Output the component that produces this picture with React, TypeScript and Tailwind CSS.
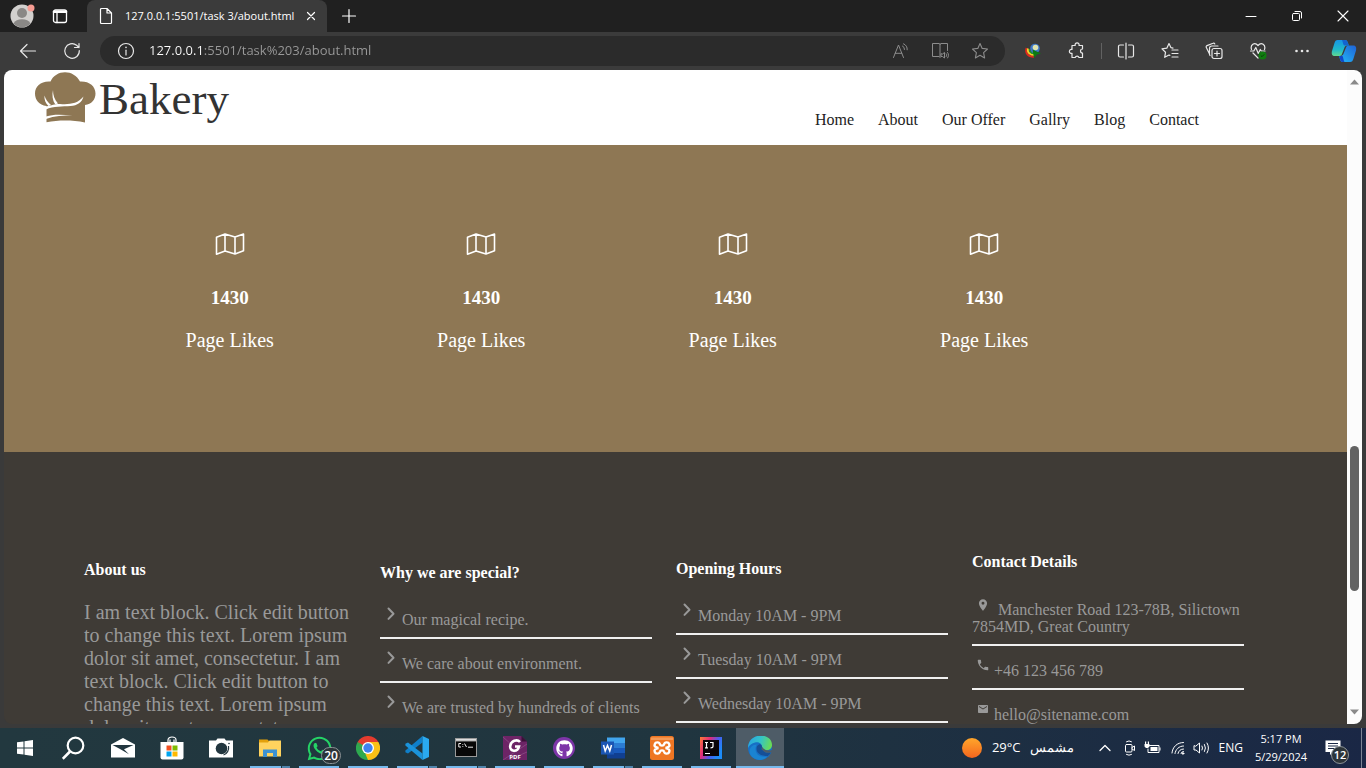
import React, { useState } from "react";
import type { ReactNode } from "react";
import { FaGithub, FaWhatsapp } from "react-icons/fa";
import { MdEmail, MdLocalPhone, MdLocationOn } from "react-icons/md";

const stroke = {
  fill: "none",
  stroke: "currentColor",
  strokeLinecap: "round" as const,
  strokeLinejoin: "round" as const,
};

function ToolButton({ label, children, className = "" }: { label: string; children: ReactNode; className?: string }) {
  return (
    <button type="button" aria-label={label} className={`flex h-8 shrink-0 items-center justify-center ${className}`}>
      {children}
    </button>
  );
}

function TitleBar() {
  return (
    <div className="flex h-8 shrink-0 items-stretch bg-[#202020] text-white">
      <ToolButton label="Profile" className="w-11">
        <svg width="26" height="26" viewBox="0 0 26 26">
          <circle cx="13" cy="13" r="11.5" fill="#d2d0ce" />
          <circle cx="13" cy="10" r="5" fill="#8a8886" />
          <path d="M4.500 20.500a11.500 11.500 0 0 0 17 0c-1.500-3-4.500-4.300-8.500-4.300s-7 1.300-8.500 4.300Z" fill="#8a8886" />
          <circle cx="22" cy="5" r="3.500" fill="#f79c93" />
        </svg>
      </ToolButton>
      <ToolButton label="Tab actions" className="w-8">
        <svg width="16" height="16" viewBox="0 0 16 16" {...stroke} strokeWidth="1.300">
          <rect x="1.500" y="2" width="13" height="12.500" rx="2" />
          <path d="M5 5v9.500" />
          <path d="M2 3.800h12" strokeWidth="2.600" />
        </svg>
      </ToolButton>
      <div className="ml-[11px] flex w-60 items-center rounded-t-lg bg-[#3b3b3b] pl-3 pr-2">
        <svg width="14" height="18" viewBox="0 0 14 18" {...stroke} strokeWidth="1.200" className="shrink-0">
          <path d="M1.500 2.500a1 1 0 0 1 1-1H8l4.500 4.500v9.500a1 1 0 0 1-1 1h-9a1 1 0 0 1-1-1ZM8 1.500V6h4.500" />
        </svg>
        <span className="ml-3 flex-1 whitespace-nowrap text-[11px]">127.0.0.1:5501/task 3/about.html</span>
        <button type="button" aria-label="Close tab" className="flex w-4 shrink-0 items-center justify-center">
          <svg width="10" height="10" viewBox="0 0 10 10" {...stroke} strokeWidth="1.200">
            <path d="m1.500 1.500 7 7m0-7-7 7" />
          </svg>
        </button>
      </div>
      <ToolButton label="New tab" className="w-11">
        <svg width="16" height="16" viewBox="0 0 16 16" {...stroke} strokeWidth="1.200">
          <path d="M8 1.500v13M1.500 8h13" />
        </svg>
      </ToolButton>
      <div className="ml-auto flex">
        <ToolButton label="Minimize" className="w-[46px]">
          <svg width="12" height="12" viewBox="0 0 12 12" {...stroke}>
            <path d="M1 6.500h10" />
          </svg>
        </ToolButton>
        <ToolButton label="Restore" className="w-[46px]">
          <svg width="12" height="12" viewBox="0 0 12 12" {...stroke}>
            <rect x="1.500" y="3.500" width="7" height="7" rx="1" />
            <path d="M4 1.500h5a1.500 1.500 0 0 1 1.500 1.500v5" />
          </svg>
        </ToolButton>
        <ToolButton label="Close" className="w-[46px]">
          <svg width="12" height="12" viewBox="0 0 12 12" {...stroke} strokeWidth="1.100">
            <path d="m1 1 10 10m0-10L1 11" />
          </svg>
        </ToolButton>
      </div>
    </div>
  );
}

function AddressBar() {
  const [url, setUrl] = useState("127.0.0.1:5501/task%203/about.html");
  return (
    <div className="flex h-[38px] shrink-0 items-center bg-[#3b3b3b] pl-1.5 pr-0.5 text-[#e8e8e8]">
      <ToolButton label="Back" className="w-11">
        <svg width="18" height="16" viewBox="0 0 18 16" {...stroke} strokeWidth="1.200">
          <path d="M16.500 8h-15M8 1.500 1.500 8 8 14.500" />
        </svg>
      </ToolButton>
      <ToolButton label="Reload" className="w-11">
        <svg width="18" height="18" viewBox="0 0 18 18" {...stroke} strokeWidth="1.200">
          <path d="M16.300 8.500a7.300 7.300 0 1 1-2.700-5.200L16 5.500M16 1.500v4h-4.500" />
        </svg>
      </ToolButton>
      <div className="ml-1.5 flex h-[30px] flex-1 items-center rounded-full bg-[#2b2b2b] pl-[17px] pr-[5px]">
        <button type="button" aria-label="Site information" className="shrink-0">
          <svg width="18" height="18" viewBox="0 0 18 18" {...stroke} strokeWidth="1.200">
            <circle cx="9" cy="9" r="7.500" />
            <path d="M9 8.200V13" />
            <path d="M9 5.400v.1" strokeWidth="1.600" />
          </svg>
        </button>
        <input
          aria-label="Address"
          value={url}
          onChange={(e) => setUrl(e.target.value)}
          className="ml-[14px] min-w-0 flex-1 bg-[linear-gradient(90deg,#ffffff_55px,#9a9a9a_55px)] bg-clip-text text-[13px] text-transparent outline-none"
        />
        <div className="flex text-[#8c8c8c]">
          <ToolButton label="Read aloud" className="w-10">
            <svg width="17" height="16" viewBox="0 0 17 16" {...stroke}>
              <path d="m1.500 14.500 5-12.500 5 12.500M3.200 10.300h6.600M10.500 3a3.500 3.500 0 0 1 2 3.500M11.500.8a6 6 0 0 1 3.700 6" />
            </svg>
          </ToolButton>
          <ToolButton label="Immersive reader" className="w-10">
            <svg width="18" height="18" viewBox="0 0 18 18" {...stroke}>
              <path d="M8 14.500H1.500v-13H8a1 1 0 0 1 1 1v13M9 2.500a1 1 0 0 1 1-1h6.500v7" />
              <path d="M10 12v2.500h1.500l2 1.500v-5.500l-2 1.500ZM15.200 11.800c.6.800.6 2 0 2.800M16.600 10.500c1.200 1.500 1.200 4 0 5.500" />
            </svg>
          </ToolButton>
          <ToolButton label="Add to favorites" className="w-10">
            <Star />
          </ToolButton>
        </div>
      </div>
      <div className="flex items-center">
        <ToolButton label="Download manager" className="ml-2 w-10">
          <svg width="18" height="16" viewBox="0 0 18 16">
            <path d="M2.500 5C1 10 4 14 10 13.800" fill="none" stroke="#e02a1c" strokeWidth="1.800" />
            <path d="M4 5.500C3 9.500 6 12 11 12" fill="none" stroke="#f6d12c" strokeWidth="1.800" />
            <path d="M5.500 6c0 3 2 4.500 5 4.500" fill="none" stroke="#1d9a2c" strokeWidth="1.500" />
            <circle cx="11" cy="5.500" r="4.800" fill="#3f78c8" />
            <circle cx="11.500" cy="4.500" r="2.800" fill="#dfe4b0" />
            <path d="M8.500 6.500 17 10.500l-4 1-3 3.500Z" fill="#0c7a13" />
          </svg>
        </ToolButton>
        <ToolButton label="Extensions" className="w-12">
          <svg width="18" height="18" viewBox="0 0 18 18" {...stroke} strokeWidth="1.200">
            <path d="M4 3.500h3.200a2 2 0 1 1 3.800 0h3.500V7a2 2 0 0 0 0 4v4.500H11a2 2 0 0 0-3.800 0H4v-4.200a2 2 0 1 1 0-3.800Z" />
          </svg>
        </ToolButton>
        <span className="h-4 w-px bg-[#626262]" />
        <ToolButton label="Split screen" className="ml-0.5 w-11">
          <svg width="18" height="18" viewBox="0 0 18 18" {...stroke} strokeWidth="1.200">
            <path d="M6.500 3H3a1.500 1.500 0 0 0-1.500 1.500v9A1.500 1.500 0 0 0 3 15h3.500M11.500 3H15a1.500 1.500 0 0 1 1.500 1.500v9A1.500 1.500 0 0 1 15 15h-3.500M9 1v16" />
          </svg>
        </ToolButton>
        <ToolButton label="Favorites" className="w-11">
          <svg width="18" height="18" viewBox="0 0 18 18" {...stroke} strokeWidth="1.200">
            <path d="m12 6-2-.3-2-4.200-2.200 4.700-4.800.7 3.500 3.400-.8 5 4.300-2.300.8.400M11 8h6M11 11.500h6M11 15h6M10 5.700l2 .5" />
          </svg>
        </ToolButton>
        <ToolButton label="Collections" className="w-11">
          <svg width="18" height="18" viewBox="0 0 18 18" {...stroke} strokeWidth="1.200">
            <rect x="7" y="6.500" width="10" height="10" rx="2" />
            <path d="M12 9v5M9.500 11.500h5M4.500 12 1.300 5.500A1.400 1.400 0 0 1 2 3.600L8 1.300a1.400 1.400 0 0 1 1.800.7M5 13.500A2.500 2.500 0 0 1 4.500 12V6.300A2.300 2.300 0 0 1 6.800 4H13" />
          </svg>
        </ToolButton>
        <ToolButton label="Browser essentials" className="w-11">
          <svg width="19" height="18" viewBox="0 0 19 18">
            <path
              {...stroke}
              strokeWidth="1.200"
              d="M2.500 7.500C1 3 5.500-.5 9 3.500c3.500-4 8-.5 6.500 4M1.500 9h3.300l2-3.500 2.500 6 2-4 1 1.500H16M4 11l5 5"
            />
            <circle cx="13.500" cy="13.500" r="4" fill="#107c10" />
            <path d="m11.800 13.500 1.200 1.200 2.200-2.300" fill="none" stroke="#0a3d0a" />
          </svg>
        </ToolButton>
        <ToolButton label="Settings and more" className="w-11">
          <svg width="16" height="4" viewBox="0 0 16 4" fill="currentColor">
            <circle cx="2.500" cy="2" r="1.300" />
            <circle cx="8" cy="2" r="1.300" />
            <circle cx="13.500" cy="2" r="1.300" />
          </svg>
        </ToolButton>
        <ToolButton label="Copilot" className="w-10">
          <svg width="26" height="24" viewBox="0 0 26 24">
            <defs>
              <linearGradient id="copilotA" x1="0" y1="0" x2="0" y2="1">
                <stop offset="0" stopColor="#1795e6" />
                <stop offset=".6" stopColor="#20b9c9" />
                <stop offset="1" stopColor="#61d890" />
              </linearGradient>
              <linearGradient id="copilotB" x1="1" y1="0" x2="0" y2="1">
                <stop offset="0" stopColor="#1f62d6" />
                <stop offset="1" stopColor="#22baf8" />
              </linearGradient>
            </defs>
            <path d="M6.500 1H14c2 0 2.500 1.500 3 3l.8 2.500H16c-1.500 0-2.200 1-2.700 2.500L11 15c-.5 1.500-1.500 2-3 2H4c-3 0-3.700-2-3-5L3.500 4C4 2 5 1 6.500 1Z" fill="url(#copilotA)" />
            <path d="M11 1h3c2 0 2.500 1.500 3 3l.8 2.500h-4C12 6.500 12 3 11 1Z" fill="#1463cf" />
            <path d="M18 6.500h4c3 0 3.600 2 3 5L22.500 19.500c-.7 2.500-1.500 3.500-3.500 3.500h-7c-2 0-2.500-1-3-3L8 17c2.500 0 4-.5 4.700-2.800L15 8.500c.5-1.500 1.500-2 3-2Z" fill="url(#copilotB)" />
            <path d="M8 17h3.500c1 2 1 4.500 2 6H12c-2 0-2.500-1-3-3Z" fill="#1148c8" />
          </svg>
        </ToolButton>
      </div>
    </div>
  );
}

function Star() {
  return (
    <svg width="18" height="18" viewBox="0 0 18 18" {...stroke} strokeWidth="1.100">
      <path d="m9 1.500 2.200 4.900 5.300.6-3.900 3.600 1 5.300L9 13.300l-4.600 2.600 1-5.300L1.500 7l5.300-.6Z" />
    </svg>
  );
}

const navItems = ["Home", "About", "Our Offer", "Gallry", "Blog", "Contact"];

function SiteHeader() {
  return (
    <header className="flex h-[75px] shrink-0 items-start bg-white pl-[30px] pr-[148px]">
      <a href="#home" className="flex items-start text-[#333]">
        <svg width="64" height="56" viewBox="0 0 64 56" className="shrink-0">
          <path
            fill="#8e7754"
            d="M12.500 36C5 35 1 30 1 23.500 1 16 7 10.800 16.500 11.500 19 5.500 25 2.200 31 2.200S43 5.500 46 11.500C55 11 61.500 16 61.500 23.500c0 6-4 11-10.500 11.500V52.500c-13-2.500-26-2.500-38.500-.2Z"
          />
          <g fill="#fff">
            <path d="M10.500 25.500c1 4 3.500 7 6.500 9.500l-2.500 1C11.500 33.500 10 29 10.500 25.500ZM19 20c0 5 1.500 9.500 5 13.500l-2.800.8C18.500 30.500 17.800 25 19 20Z" />
            <path d="M12 36.500c7-1.500 9-2.800 14-2.500 9 .6 17.500 0 23.500-7.500-1.500 6-6 9-13 9.500-8 .5-17 0-24.500 3.500Z" />
            <path d="M12 46.500c8-3 17-1.500 26.500-1.500-9 .5-18 .8-26.500 4Z" />
          </g>
        </svg>
        <span className="ml-px mt-[3px] font-['Liberation_Serif',serif] text-[45px] leading-[52px]">Bakery</span>
      </a>
      <nav className="ml-auto mt-10 flex gap-6 text-base leading-5 text-[#222]">
        {navItems.map((item) => (
          <a key={item} href={`#${item.toLowerCase().replace(" ", "-")}`}>
            {item}
          </a>
        ))}
      </nav>
    </header>
  );
}

function MapIcon() {
  return (
    <svg width="30" height="24" viewBox="0 0 30 24" {...stroke} strokeWidth="1.600">
      <path d="M1.500 5.200v17L10 19l10 3 8.500-3.200V2L20 5 10 2 1.500 5.200ZM10 2v17M20 5v17" />
    </svg>
  );
}

function Stats() {
  return (
    <section className="h-[307px] shrink-0 bg-[#8e7754] pl-[100px] pr-[237px] pt-[87px] text-white">
      <ul className="grid grid-cols-4">
        {[0, 1, 2, 3].map((n) => (
          <li key={n} className="flex flex-col items-center">
            <MapIcon />
            <h3 className="mt-8 text-[19px] font-bold leading-5">1430</h3>
            <p className="mt-5 text-xl leading-6">Page Likes</p>
          </li>
        ))}
      </ul>
    </section>
  );
}

function Heading({ children }: { children: ReactNode }) {
  return <h4 className="text-base font-bold leading-[18px] text-white">{children}</h4>;
}

function ArrowList({ items }: { items: string[] }) {
  return (
    <ul className="mt-5">
      {items.map((item) => (
        <li key={item} className="mb-[7px] flex h-[37px] items-start border-b-2 border-[#f0f0f0] pt-[5px]">
          <svg width="22" height="14" viewBox="0 0 22 14" {...stroke} strokeWidth="2" className="shrink-0">
            <path d="m8.500 1.500 5 5.200-5 5.200" />
          </svg>
          <span className="mt-1 whitespace-nowrap leading-[18px]">{item}</span>
        </li>
      ))}
    </ul>
  );
}

function SiteFooter() {
  return (
    <footer className="grid flex-1 grid-cols-4 items-start gap-6 bg-[#3f3b36] pl-20 pr-[103px] pt-[100px] text-base text-[#999]">
      <section className="pt-[9px]">
        <Heading>About us</Heading>
        <p className="mt-[22px] text-xl leading-[23px]">
          I am text block. Click edit button to change this text. Lorem ipsum dolor sit amet, consectetur. I am text
          block. Click edit button to change this text. Lorem ipsum dolor sit amet, consectetur.
        </p>
      </section>
      <section className="pt-3">
        <Heading>Why we are special?</Heading>
        <ArrowList items={["Our magical recipe.", "We care about environment.", "We are trusted by hundreds of clients"]} />
      </section>
      <section className="pt-2">
        <Heading>Opening Hours</Heading>
        <ArrowList items={["Monday 10AM - 9PM", "Tuesday 10AM - 9PM", "Wednesday 10AM - 9PM"]} />
      </section>
      <section className="pt-px">
        <Heading>Contact Details</Heading>
        <ul className="mt-[27px] leading-[17px]">
          <li className="h-12 border-b-2 border-[#f0f0f0]">
            <MdLocationOn size={14} className="ml-1 mr-2 inline align-[3px]" />
            Manchester Road 123-78B, Silictown 7854MD, Great Country
          </li>
          <li className="flex h-11 items-start border-b-2 border-[#f0f0f0] pt-3">
            <MdLocalPhone size={14} className="mx-1 shrink-0" />
            <span className="mt-1">+46 123 456 789</span>
          </li>
          <li className="flex h-11 items-start pt-3">
            <MdEmail size={14} className="mx-1 shrink-0 p-px" />
            <span className="mt-1">hello@sitename.com</span>
          </li>
        </ul>
      </section>
    </footer>
  );
}

function ScrollBar() {
  return (
    <div className="flex w-[15px] shrink-0 flex-col items-center bg-[#fcfcfc] text-[#8a8a8a]">
      <button type="button" aria-label="Scroll up" className="flex h-6 w-full items-center justify-center">
        <svg width="9" height="6" viewBox="0 0 9 6" fill="currentColor">
          <path d="M4.500.5 9 5.500H0Z" />
        </svg>
      </button>
      <div className="flex w-full flex-1 flex-col items-center">
        <div className="flex-[352]" />
        <div className="w-[9px] flex-[145] rounded-full bg-[#636363]" />
        <div className="flex-[109]" />
      </div>
      <button type="button" aria-label="Scroll down" className="flex h-6 w-full items-center justify-center">
        <svg width="9" height="6" viewBox="0 0 9 6" fill="currentColor">
          <path d="M0 .5h9L4.500 5.500Z" />
        </svg>
      </button>
    </div>
  );
}

type App = { name: string; icon: ReactNode; state?: "open" | "stacked" | "active"; badge?: string };

const apps: App[] = [
  {
    name: "Start",
    icon: (
      <svg width="16" height="16" viewBox="0 0 16 16" fill="#fff">
        <path d="m0 2.300 6.500-.9v6.100H0ZM7.500 1.200 16 0v7.500H7.500ZM0 8.500h6.500v6.100L0 13.700ZM7.500 8.500H16V16l-8.500-1.200Z" />
      </svg>
    ),
  },
  {
    name: "Search",
    icon: (
      <svg width="24" height="24" viewBox="0 0 24 24" fill="none" stroke="#fff" strokeWidth="2.200">
        <circle cx="13.500" cy="9.500" r="7.800" />
        <path d="M8 15.500.8 22.800" strokeWidth="2.600" />
      </svg>
    ),
  },
  {
    name: "Mail",
    icon: (
      <svg width="24" height="20" viewBox="0 0 24 20">
        <path d="M0 6.500 12 0l12 6.500V19.500H0Z" fill="#fff" />
        <path d="M1.500 7h21L13 11.200l5 5L9 11Z" fill="#22363f" />
      </svg>
    ),
  },
  {
    name: "Store",
    icon: (
      <svg width="24" height="24" viewBox="0 0 24 24">
        <path d="M8 7V4c0-4 8-4 8 0v3M10 7V3.500M14 7V3.500" fill="none" stroke="#fff" strokeWidth="1.200" />
        <path d="M.5 6h23v15.500a2 2 0 0 1-2 2h-19a2 2 0 0 1-2-2Z" fill="#fff" />
        <path d="M6.500 9.500h5v5h-5Z" fill="#f25022" />
        <path d="M12.500 9.500h5v5h-5Z" fill="#7fba00" />
        <path d="M6.500 15.500h5v5h-5Z" fill="#00a4ef" />
        <path d="M12.500 15.500h5v5h-5Z" fill="#ffb900" />
      </svg>
    ),
  },
  {
    name: "Camera",
    icon: (
      <svg width="24" height="20" viewBox="0 0 24 20">
        <path d="M0 2.500h7L8.500.5h7l1.500 2h7v17H0Z" fill="#fff" />
        <circle cx="12.500" cy="10.500" r="5.800" fill="#22363f" />
        <path d="M19.500 8c.8 4-1.500 8-5 9" fill="none" stroke="#22363f" strokeWidth="1.200" />
        <circle cx="20" cy="5.500" r=".8" fill="#22363f" />
      </svg>
    ),
  },
  {
    name: "File Explorer",
    state: "stacked",
    icon: (
      <svg width="22" height="20" viewBox="0 0 22 20">
        <path d="M0 1.500h8.500l1.500 1.500h12V5H0Z" fill="#e3a10b" />
        <path d="M0 4.500h9l1.500-2H22v16H0Z" fill="#ffd35e" />
        <path d="M4 11.500h14v7.500h-4v-4H8v4H4Z" fill="#3d92d2" />
      </svg>
    ),
  },
  { name: "WhatsApp", state: "open", badge: "20", icon: <FaWhatsapp size={27} color="#25d366" /> },
  {
    name: "Chrome",
    state: "open",
    icon: (
      <svg width="24" height="24" viewBox="0 0 24 24">
        <path d="M12 12 1.600 6A12 12 0 0 1 22.400 6Z" fill="#e33b2e" />
        <path d="M12 12 22.400 6A12 12 0 0 1 12 24Z" fill="#fbc116" />
        <path d="M12 12v12A12 12 0 0 1 1.600 6Z" fill="#2da94f" />
        <path d="M12 6h10.400L17 14.700Z" fill="#fbc116" />
        <path d="M17.200 15 12 24l-3-7Z" fill="#fbc116" />
        <path d="m6.800 15L1.600 6 12 6Z" fill="#e33b2e" />
        <path d="m1.600 6 5.200 9L10 18l2-6Z" fill="#2da94f" />
        <circle cx="12" cy="12" r="6" fill="#fff" />
        <circle cx="12" cy="12" r="4.700" fill="#3f82f0" />
      </svg>
    ),
  },
  {
    name: "Visual Studio Code",
    state: "stacked",
    icon: (
      <svg width="24" height="24" viewBox="0 0 24 24">
        <path d="M17.500 0v6.500L3 17.500.4 16.200v-1.600Z" fill="#0f7fc9" />
        <path d="M17.500 24v-6.500L3 6.500.4 7.800v1.600Z" fill="#1b93da" />
        <path d="M17.500 0 24 3v18l-6.500 3Z" fill="#2aaaf0" />
      </svg>
    ),
  },
  {
    name: "Command Prompt",
    state: "stacked",
    icon: (
      <svg width="22" height="20" viewBox="0 0 22 20">
        <path d="M0 0h22v19H0Z" fill="#9a9a9a" />
        <path d="M1 1h20v1.600H1Z" fill="#dedede" />
        <path d="M1 3.500h20v14.500H1Z" fill="#080808" />
        <path d="M6 5.500H3.800v3.500H6M7.800 6v.8M7.800 8.200V9M9.500 5.500l2 3.500M13 9.200h5" fill="none" stroke="#eee" />
      </svg>
    ),
  },
  {
    name: "PDF Editor",
    state: "open",
    icon: (
      <svg width="24" height="24" viewBox="0 0 24 24">
        <path d="M0 0h18.500L24 5.500V24H0Z" fill="#6d2466" />
        <path d="m0 1 9 8M24 8 0 24M6 24 24 16" stroke="#8d4d86" strokeWidth=".8" />
        <path d="M18.500 0v5.500H24Z" fill="#3c1038" />
        <path d="M17 6c-3-3.500-9-1-9.800 4-.8 6 7.300 6.500 8.800.5h-4" fill="none" stroke="#fff" strokeWidth="2.600" />
        <text x="12" y="22.500" textAnchor="middle" fontSize="6" fontWeight="700" fill="#fff">
          PDF
        </text>
      </svg>
    ),
  },
  {
    name: "GitHub Desktop",
    state: "open",
    icon: (
      <span className="flex size-[22px] items-center justify-center rounded-full bg-[#7d35a8]">
        <FaGithub size={17} color="#fff" />
      </span>
    ),
  },
  {
    name: "Word",
    state: "stacked",
    icon: (
      <svg width="24" height="22" viewBox="0 0 24 22">
        <path d="M6 .5h18v5.500H6Z" fill="#41a5ee" />
        <path d="M6 6h18v5H6Z" fill="#2b7cd3" />
        <path d="M6 11h18v5H6Z" fill="#185abd" />
        <path d="M6 16h18v5.500H6Z" fill="#103f91" />
        <path d="M0 4.500h13v13H0Z" fill="#1a56b4" />
        <path d="m2.500 8 1.700 6 2.300-5.500L8.800 14l1.700-6" fill="none" stroke="#fff" strokeWidth="1.500" />
      </svg>
    ),
  },
  {
    name: "XAMPP",
    state: "open",
    icon: (
      <svg width="24" height="24" viewBox="0 0 24 24">
        <rect width="24" height="24" rx="2.500" fill="#ee7623" />
        <path d="M1 1.500h22V4H1Z" fill="#f49a57" />
        <path
          d="M8.500 12C5 11.500 4 10 4.800 8c.8-2.200 4.500-2.300 5.200.5.300 1.500 3.700 1.500 4 0 .7-2.800 4.400-2.700 5.200-.5.800 2-.2 3.500-3.700 4 3.500.5 4.500 2 3.700 4-.8 2.200-4.500 2.300-5.200-.5-.3-1.500-3.700-1.500-4 0-.7 2.800-4.400 2.700-5.200.5-.8-2 .2-3.500 3.700-4Z"
          fill="none"
          stroke="#fff"
          strokeWidth="2.400"
        />
      </svg>
    ),
  },
  {
    name: "IntelliJ IDEA",
    state: "open",
    icon: (
      <svg width="22" height="22" viewBox="0 0 22 22">
        <defs>
          <linearGradient id="ideaFrame" x1="0" y1="0" x2="1" y2=".5">
            <stop offset="0" stopColor="#fd7c34" />
            <stop offset=".4" stopColor="#e02a7c" />
            <stop offset=".7" stopColor="#4a5cf0" />
            <stop offset="1" stopColor="#1c8cf8" />
          </linearGradient>
        </defs>
        <path d="M0 0h22v22H0Z" fill="url(#ideaFrame)" />
        <path d="M3 3h16v16H3Z" fill="#0a0408" />
        <path d="M5 5.500h3M6.500 5.500v5M5 10.800h3M10 5.500h3v4c0 1-1 1.300-2.500 1.300M5 16.500h5" fill="none" stroke="#fff" strokeWidth="1.200" />
      </svg>
    ),
  },
  {
    name: "Microsoft Edge",
    state: "active",
    icon: (
      <svg width="24" height="24" viewBox="0 0 24 24">
        <defs>
          <linearGradient id="edgeTop" x1="0" y1=".3" x2="1" y2=".5">
            <stop offset="0" stopColor="#2aa6e0" />
            <stop offset=".5" stopColor="#33c2c9" />
            <stop offset="1" stopColor="#6bdc52" />
          </linearGradient>
        </defs>
        <circle cx="12" cy="12" r="12" fill="#176fc5" />
        <path d="M0 12C0-4 24-4 24 9c0 5-6 6.500-9.500 5-1.500-.7-.5-1.500-.5-3 0-4-4-5.500-7-4.500-3 .8-6 2.500-7 5.500Z" fill="url(#edgeTop)" />
        <path d="M7.500 13c0 6 5.500 9 12 7.200C15 26 5.500 24.500 2.500 19 0 14 3 8.500 9 8.500c-1 1-1.500 2.500-1.500 4.500Z" fill="#1a84d2" />
        <path d="M14.500 14c-1.500-.7-.5-1.500-.5-3 0-2-1.500-3-3-2.500-4 1.500-4.500 11.500 8.500 11.700 1.800-1 3-2.700 3.300-3.900-2 1-6 .7-8.300-2.300Z" fill="#164f97" />
        <path d="M14.500 14c-1.500-.7-.5-1.500-.5-3s2 5.500 10 3v2l-1.200.3c-2 1-6 .7-8.300-2.300Z" fill="#4e5c67" />
      </svg>
    ),
  },
];

function Underline({ state }: { state: App["state"] }) {
  if (!state) return <span className="h-0.5" />;
  if (state === "active") return <span className="h-0.5 w-full bg-[#76b9ed]" />;
  if (state === "open") return <span className="h-0.5 w-10 bg-[#76b9ed]" />;
  return (
    <span className="flex h-0.5 w-10 gap-px">
      <span className="flex-1 bg-[#76b9ed]" />
      <span className="w-2 bg-[#5084ac]" />
    </span>
  );
}

function TaskBar() {
  return (
    <div className="flex h-10 shrink-0 items-stretch bg-linear-to-r from-[#22383f] via-[#20353f] to-[#1a2745] text-white">
      <div className="flex gap-px pl-px">
        {apps.map((app) => (
          <button
            key={app.name}
            type="button"
            aria-label={app.name}
            className={`relative flex w-12 flex-col items-center ${app.state === "active" ? "bg-[#4e5c67]" : ""}`}
          >
            <span className="flex flex-1 items-center pt-0.5">{app.icon}</span>
            <Underline state={app.state} />
            {app.badge && (
              <span className="absolute bottom-1 right-0.5 flex h-[17px] w-5 items-center justify-center rounded-full border border-[#8b9296] bg-[#2c3439] text-xs font-semibold">
                {app.badge}
              </span>
            )}
          </button>
        ))}
      </div>
      <div className="ml-auto flex items-center text-xs">
        <button type="button" className="flex items-center">
          <span className="size-5 rounded-full bg-linear-to-b from-[#ffa62b] to-[#f3641e]" />
          <span className="ml-2.5 text-[13px]">29°C</span>
          <span dir="rtl" className="ml-[9px] text-[13px]">
            مشمس
          </span>
        </button>
        <button type="button" aria-label="Show hidden icons" className="ml-[25px] w-3">
          <svg width="12" height="8" viewBox="0 0 12 8" {...stroke} strokeWidth="1.300">
            <path d="m1 6.500 5-5 5 5" />
          </svg>
        </button>
        <svg width="12" height="16" viewBox="0 0 12 16" {...stroke} className="ml-[13px]">
          <rect x="1.500" y="4.500" width="6.500" height="7.500" rx="1" />
          <path d="M8 7.500 10.500 6v4.500L8 9M2.500 1.700Q5 0 7.500 1.700M2.500 14.500q2.500 1.500 5 0" />
        </svg>
        <svg width="17" height="14" viewBox="0 0 17 14" className="ml-2">
          <path d="M5.500 4.500H15v7H4V8" {...stroke} />
          <path d="M6.500 6H13.500v4h-7Z" fill="#fff" />
          <path d="M15.500 6.500h1v3h-1ZM.5 3h5v2.500L4 7H2L.5 5.500ZM1 .5h1.200V3H1ZM3.800.5H5V3H3.800Z" fill="#fff" />
        </svg>
        <svg width="14" height="14" viewBox="0 0 14 14" {...stroke} className="ml-2.5">
          <path d="M1 12C1.500 6 6 1.500 12.500 1.500M4 12.500c.5-4 4-7.500 8.500-7.500M7 12.500C7.500 10 9.500 8 12.500 8M10 12.500a2.500 2.500 0 0 1 2.500-2" />
          <circle cx="12" cy="12.500" r=".8" fill="#fff" />
        </svg>
        <svg width="17" height="14" viewBox="0 0 17 14" {...stroke} className="ml-2">
          <path d="M1 5v4h2l3.500 3V2L3 5ZM9 5q1.200 2 0 4M11.500 3.500q2 3.500 0 7M14 2q3 5 0 10" />
        </svg>
        <span className="ml-[9px]">ENG</span>
        <span className="ml-2.5 flex w-[56px] flex-col items-center whitespace-nowrap text-[11px] leading-[18px]">
          <span>5:17 PM</span>
          <span>5/29/2024</span>
        </span>
        <button type="button" aria-label="Notifications" className="relative ml-4 mr-2 h-8 w-[28px]">
          <svg width="17" height="17" viewBox="0 0 17 17" className="mt-px">
            <path d="M.5.500h15v11.500H8l-3 3v-3H.5Z" fill="#fff" />
            <path d="M3 3.500h10M3 6h10M3 8.500h10" stroke="#1b2947" strokeWidth="1.200" />
          </svg>
          <span className="absolute bottom-0 right-1 flex size-[18px] items-center justify-center rounded-full border border-[#8b9296] bg-[#2c3439] text-[11px] font-semibold">
            12
          </span>
        </button>
        <span className="mr-1 h-full w-px bg-[#7b8494]" />
      </div>
    </div>
  );
}

export default function App() {
  return (
    <div className="flex h-screen flex-col overflow-hidden bg-[#3a3a3a] font-['Open_Sans','Noto_Sans',sans-serif]">
      <TitleBar />
      <AddressBar />
      <main className="mx-1 mb-1 flex min-h-0 flex-1 overflow-hidden rounded-lg">
        <div className="flex min-w-0 flex-1 flex-col overflow-hidden font-['Liberation_Serif',serif]">
          <SiteHeader />
          <Stats />
          <SiteFooter />
        </div>
        <ScrollBar />
      </main>
      <TaskBar />
    </div>
  );
}
